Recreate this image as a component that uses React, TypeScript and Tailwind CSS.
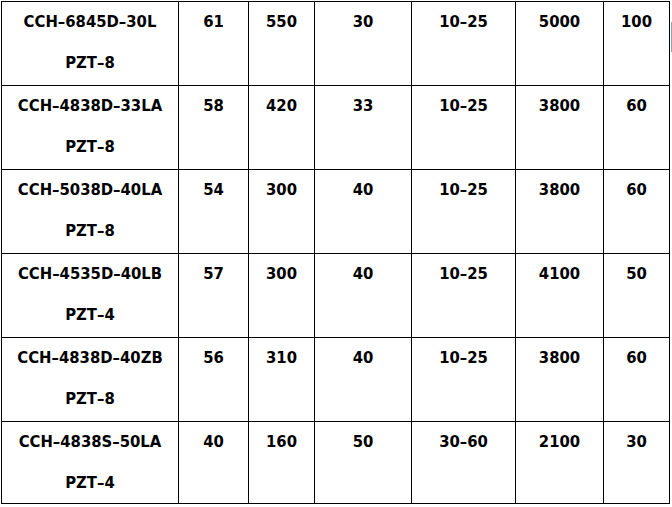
const rows = [
  ["CCH-6845D-30L", "PZT-8", "61", "550", "30", "10-25", "5000", "100"],
  ["CCH-4838D-33LA", "PZT-8", "58", "420", "33", "10-25", "3800", "60"],
  ["CCH-5038D-40LA", "PZT-8", "54", "300", "40", "10-25", "3800", "60"],
  ["CCH-4535D-40LB", "PZT-4", "57", "300", "40", "10-25", "4100", "50"],
  ["CCH-4838D-40ZB", "PZT-8", "56", "310", "40", "10-25", "3800", "60"],
  ["CCH-4838S-50LA", "PZT-4", "40", "160", "50", "30-60", "2100", "30"],
];

const widths = ["w-[177px]", "w-[70px]", "w-[66px]", "w-[97px]", "w-[104px]", "w-[88px]", "w-[66px]"];

const dash = (s: string) => s.replace(/-/g, "\u2013");

export default function App() {
  return (
    <div className="relative bg-white w-[672px] h-[507px] overflow-hidden">
      <table
        className="border-collapse text-black font-bold text-[16.5px] ml-[1px] mt-[1px]"
        style={{ fontFamily: '"DejaVu Sans Condensed", "DejaVu Sans", sans-serif' }}
      >
        <tbody>
          {rows.map((r, ri) => (
            <tr key={r[0]} className={ri === rows.length - 1 ? "h-[82px]" : "h-[84px]"}>
              <td className={`${widths[0]} border border-black text-center align-top p-0`}>
                <div className="leading-[40px]">{dash(r[0])}</div>
                <div className="leading-[41px]">{dash(r[1])}</div>
              </td>
              {r.slice(2).map((v, i) => (
                <td key={i} className={`${widths[i + 1]} border border-black text-center align-top p-0 leading-[40px]`}>
                  {dash(v)}
                </td>
              ))}
            </tr>
          ))}
        </tbody>
      </table>
      {/* stray scrollbar mark at the right edge */}
      <div className="absolute left-[671px] top-[22px] w-[1px] h-[30px] bg-gray-400" />
    </div>
  );
}
